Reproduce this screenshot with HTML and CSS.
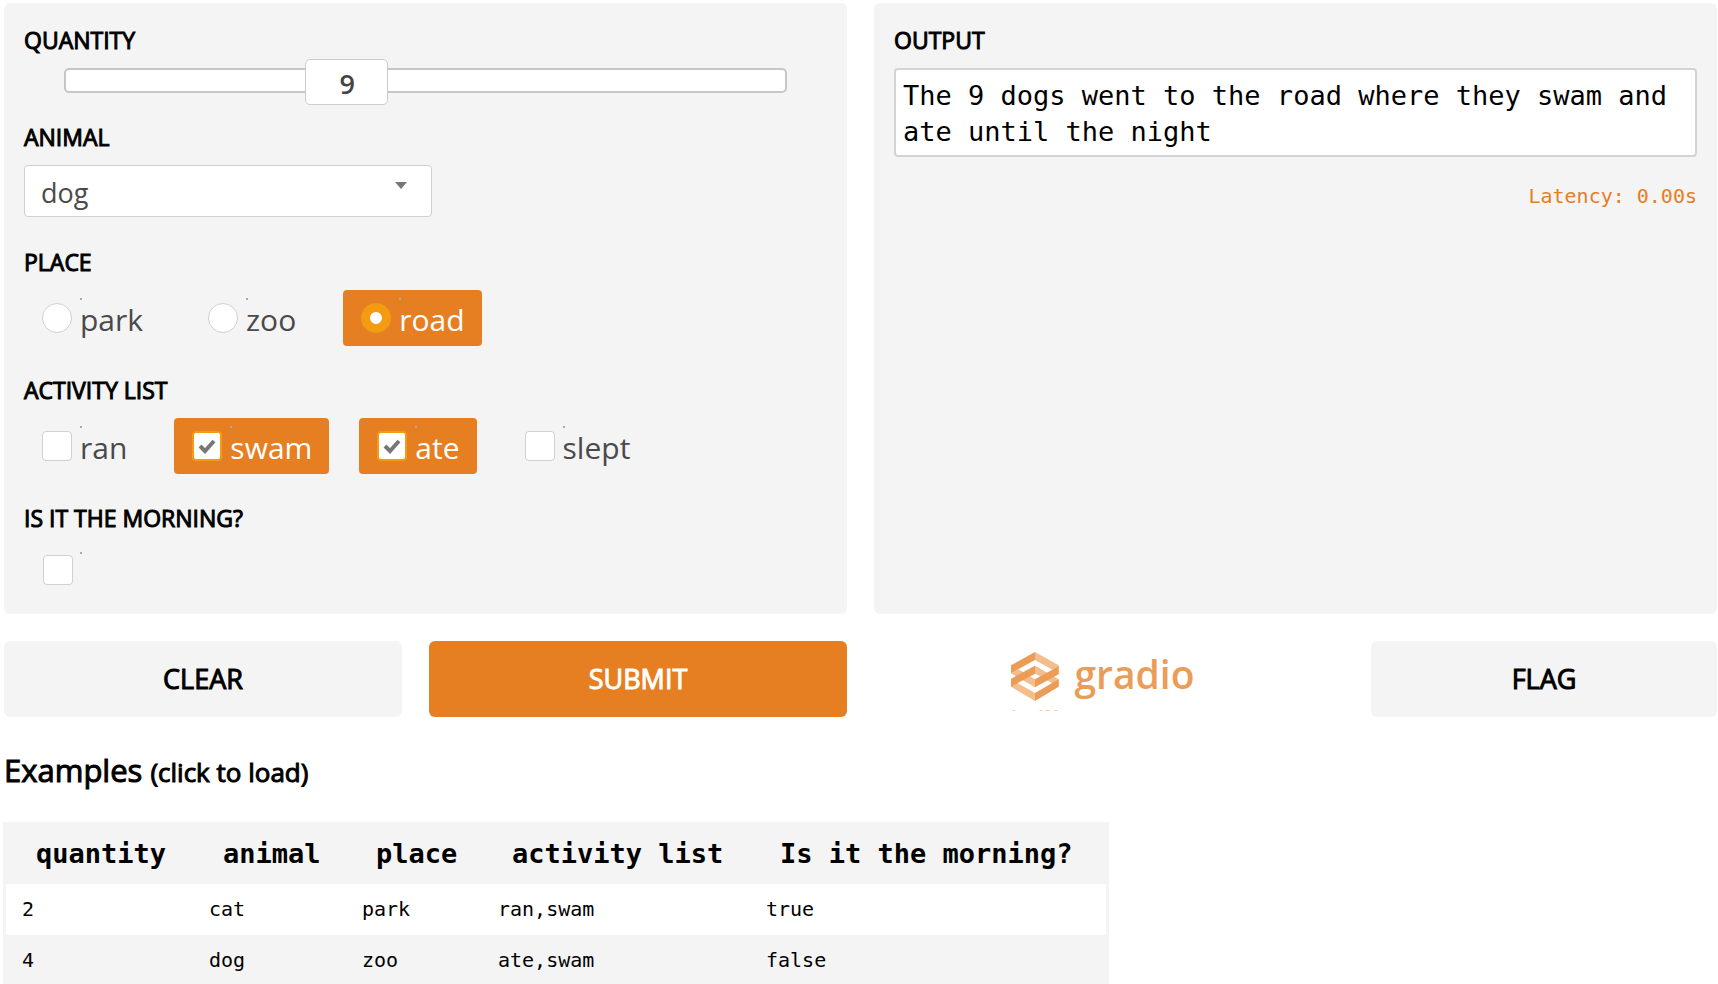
FILE: index.html
```html
<!DOCTYPE html>
<html lang="en">
<head>
<meta charset="utf-8">
<title>Gradio</title>
<link rel="stylesheet" href="styles.css">
</head>
<body>
<main class="page">
  <div class="columns">
    <section class="panel">
      <label class="label" for="quantity">QUANTITY</label>
      <div class="slider">
        <input class="slider-input" id="quantity" type="range" min="2" max="20" value="9">
        <output class="slider-value" for="quantity" style="left:38.9%">9</output>
      </div>
      <label class="label" for="animal">ANIMAL</label>
      <div class="select">
        <select class="select-input" id="animal"><option>dog</option><option>cat</option></select>
        <svg class="select-arrow" viewBox="0 0 12 7" aria-hidden="true"><path d="M0 0h12L6 7z"/></svg>
      </div>
      <div class="label" id="place">PLACE</div>
      <div class="options" role="radiogroup" aria-labelledby="place">
        <label class="option"><input class="box round" type="radio" name="place"><span class="name">park</span></label>
        <label class="option"><input class="box round" type="radio" name="place"><span class="name">zoo</span></label>
        <label class="option"><input class="box round" type="radio" name="place" checked><span class="name">road</span></label>
      </div>
      <div class="label" id="activity">ACTIVITY LIST</div>
      <div class="options" role="group" aria-labelledby="activity">
        <label class="option"><input class="box" type="checkbox"><span class="name">ran</span></label>
        <label class="option"><input class="box" type="checkbox" checked><svg class="tick" viewBox="0 0 18 16" aria-hidden="true"><path d="M2 8l5 5 9-10"/></svg><span class="name">swam</span></label>
        <label class="option"><input class="box" type="checkbox" checked><svg class="tick" viewBox="0 0 18 16" aria-hidden="true"><path d="M2 8l5 5 9-10"/></svg><span class="name">ate</span></label>
        <label class="option"><input class="box" type="checkbox"><span class="name">slept</span></label>
      </div>
      <label class="label" for="morning">IS IT THE MORNING?</label>
      <div class="single"><input class="box" id="morning" type="checkbox"><span class="name"></span></div>
    </section>
    <section class="panel">
      <label class="label" for="output">OUTPUT</label>
      <textarea class="output" id="output" rows="2" readonly>The 9 dogs went to the road where they swam and ate until the night</textarea>
      <div class="latency">Latency: 0.00s</div>
    </section>
    <div class="actions">
      <button class="button clear" type="button">CLEAR</button>
      <button class="button submit" type="button">SUBMIT</button>
    </div>
    <div class="actions">
      <a class="logo" href="#">
        <svg class="logo-mark" viewBox="0 0 144 177" aria-hidden="true">
          <g fill="#f3bd8c">
            <path d="M72 0l71 40v24L72 24z"/>
            <path d="M0 64l22-12 50 30v24z"/>
            <path d="M72 41l71 41v22L52 53z"/>
            <path d="M0 82l72 41v24L0 104z"/>
            <path d="M4 174h8v2H4zM86 174h8v2h-8zM102 174h14v2h-14zM130 174h10v2h-10z"/>
          </g>
          <g fill="#eb9d57">
            <path d="M72 0v24L0 64V40z"/>
            <path d="M72 41v24L0 104V80z"/>
            <path d="M143 43v24L72 106V82z"/>
            <path d="M143 82v22l-71 43v-24z"/>
          </g>
        </svg>
        <span>gradio</span>
      </a>
      <button class="button flag" type="button">FLAG</button>
    </div>
  </div>
  <h2 class="heading">Examples <small class="hint">(click to load)</small></h2>
  <table class="examples">
    <colgroup><col class="c1"><col class="c2"><col class="c3"><col class="c4"><col class="c5"></colgroup>
    <thead><tr><th>quantity</th><th>animal</th><th>place</th><th>activity list</th><th>Is it the morning?</th></tr></thead>
    <tbody>
      <tr><td>2</td><td>cat</td><td>park</td><td>ran,swam</td><td>true</td></tr>
      <tr><td>4</td><td>dog</td><td>zoo</td><td>ate,swam</td><td>false</td></tr>
    </tbody>
  </table>
</main>
</body>
</html>
```
FILE: styles.css
```css
* { box-sizing: border-box; }
body {
  margin: 0;
  background: #fff;
  color: #000;
  font-family: "Open Sans", sans-serif;
}
.page { padding: 3px 1px 0 4px; }
.columns {
  display: grid;
  grid-template-columns: 1fr 1fr;
  gap: 27px;
}
.panel {
  display: flex;
  flex-direction: column;
  padding: 21px 20px 19px;
  border-radius: 6px;
  background: #f4f4f4;
}
.label {
  font-size: 23px;
  line-height: 32px;
  -webkit-text-stroke: 1px #000;
}
.slider {
  position: relative;
  height: 25px;
  margin: 12px 40px 28px;
  border: 2px solid #c6c6c6;
  border-radius: 5px;
  background: #fff;
}
.slider-input {
  position: absolute;
  top: -11px;
  left: -40px;
  width: calc(100% + 82px);
  height: 46px;
  margin: 0;
  appearance: none;
  background: none;
}
.slider-input::-webkit-slider-thumb {
  appearance: none;
  width: 83px;
  height: 46px;
  border: 1px solid #ccc;
  border-radius: 5px;
  background: #fff;
}
.slider-value {
  position: absolute;
  top: -11px;
  width: 83px;
  margin-left: -40px;
  color: #444;
  font-size: 27px;
  font-weight: 600;
  line-height: 49px;
  text-align: center;
  pointer-events: none;
}
.select {
  position: relative;
  width: 408px;
  margin: 12px 0 29px;
}
.select-input {
  display: block;
  width: 100%;
  height: 52px;
  padding: 2px 16px 0;
  appearance: none;
  border: 1px solid #d0d0d0;
  border-radius: 4px;
  background: #fff;
  color: #4a4a4a;
  font: 27px "Open Sans", sans-serif;
}
.select-arrow {
  position: absolute;
  top: 17px;
  right: 25px;
  width: 12px;
  height: 7px;
  fill: #777;
}
.options {
  display: flex;
  gap: 30px;
  margin: 12px 0 28px;
}
.option {
  position: relative;
  display: flex;
  align-items: center;
  height: 56px;
  padding: 0 17px 0 18px;
  gap: 8px;
  border-radius: 4px;
  color: #4a4a4a;
  font-size: 30px;
}
.option:has(:checked) {
  background: #e67e22;
  color: #fff;
}
.box {
  width: 30px;
  height: 30px;
  margin: 0;
  appearance: none;
  border: 1px solid #d0d0d0;
  border-radius: 4px;
  background: #fff;
}
.box:checked { border: 2px solid #f39c12; }
.round { border-radius: 50%; }
.round:checked { border: 9px solid #f39c12; }
.tick {
  position: absolute;
  top: 20px;
  left: 24px;
  width: 18px;
  height: 16px;
  fill: none;
  stroke: #777;
  stroke-width: 4;
}
.name {
  position: relative;
  padding-top: 3px;
  line-height: 53px;
}
.name::before {
  content: "";
  position: absolute;
  top: 8px;
  left: 0;
  width: 2px;
  height: 2px;
  background: #aaa;
}
.single {
  display: flex;
  gap: 7px;
  align-items: center;
  height: 51px;
  margin-top: 10px;
  padding-left: 19px;
}
.single .name { align-self: flex-start; }
.output {
  margin-top: 12px;
  height: 89px;
  padding: 8px 7px;
  border: 2px solid #d3d3d3;
  border-radius: 4px;
  background: #fff;
  color: #000;
  font: 27px/36px "DejaVu Sans Mono", monospace;
  resize: none;
  overflow: hidden;
}
.latency {
  margin-top: 25px;
  color: #e67e22;
  font: 20px/28px "DejaVu Sans Mono", monospace;
  text-align: right;
}
.actions {
  display: flex;
  gap: 27px;
}
.button {
  height: 76px;
  padding: 0 0 2px;
  border: 0;
  border-radius: 6px;
  background: #f4f4f4;
  color: #000;
  font: 27px "Open Sans", sans-serif;
  -webkit-text-stroke: 1px;
}
.clear { flex: 398; }
.submit {
  flex: 418;
  background: #e67e22;
  color: #fff;
}
.flag { flex: 346; }
.logo {
  display: flex;
  flex: 458;
  justify-content: center;
  gap: 15px;
  padding: 0 12px 8px 0;
  color: #eb9d57;
  font-size: 39px;
  font-weight: 600;
  line-height: 65px;
  text-decoration: none;
}
.logo-mark {
  width: 48px;
  height: 59px;
  margin-top: 11px;
}
.heading {
  margin: 29px 0 28px;
  font-size: 31px;
  font-weight: 400;
  line-height: 44px;
  -webkit-text-stroke: 1px;
}
.hint { font-size: 26px; }
.examples {
  width: 1106px;
  margin-left: -1px;
  border-collapse: separate;
  border-spacing: 0;
  border: solid #f4f4f4;
  border-width: 0 3px;
  table-layout: fixed;
  font: 20px "DejaVu Sans Mono", monospace;
}
.c1 { width: 187px; }
.c2 { width: 153px; }
.c3 { width: 136px; }
.c4 { width: 268px; }
.examples th {
  height: 62px;
  padding: 0 0 0 30px;
  background: #f4f4f4;
  font-size: 27px;
  text-align: left;
}
.examples td {
  height: 51px;
  padding: 0 16px 2px;
}
.examples tr:nth-child(even) td { background: #f4f4f4; }
```
